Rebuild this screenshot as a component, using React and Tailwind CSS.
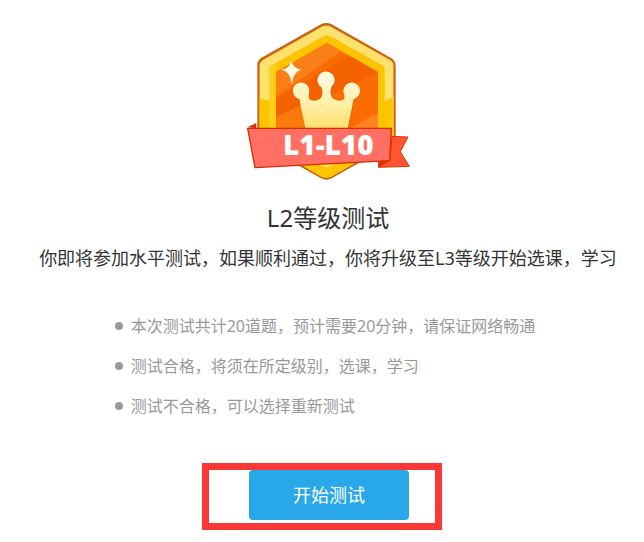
const tips = [
    "本次测试共计20道题，预计需要20分钟，请保证网络畅通",
    "测试合格，将须在所定级别，选课，学习",
    "测试不合格，可以选择重新测试",
];

// 等级徽章
function LevelBadge({ label }) {
    return (
        <svg viewBox="0 3 528 498" className="w-44" role="img" aria-label={label}>
            <defs>
                <linearGradient id="crown" x1="0" y1="0" x2="0" y2="1">
                    <stop offset="0" stopColor="#fffbe8" />
                    <stop offset="0.5" stopColor="#fff1b0" />
                    <stop offset="1" stopColor="#ffe068" />
                </linearGradient>
                <linearGradient id="rim" x1="0" y1="0" x2="1" y2="0">
                    <stop offset="0" stopColor="#ffd21f" />
                    <stop offset="0.1" stopColor="#ffc400" />
                    <stop offset="1" stopColor="#ffc400" />
                </linearGradient>
                <clipPath id="plate">
                    <path d="M70 134 L245 35 Q259 28 273 35 L449 134 Q461 141 461 154 V364 Q461 377 449 384 L273 485 Q259 491 245 485 L70 384 Q58 377 58 364 V154 Q58 141 70 134Z" />
                </clipPath>
                <clipPath id="core">
                    <path d="M261 84 L414 171 V348 L261 436 L108 348 V171Z" />
                </clipPath>
            </defs>

            {/* 外框 */}
            <path d="M67 127 L243 28 Q259 20 275 28 L453 129 Q467 137 467 153 V366 Q467 382 453 390 L275 490 Q259 498 243 490 L66 390 Q52 382 52 366 V150 Q52 135 67 127Z" fill="#cb620e" />
            <g clipPath="url(#plate)">
                <path d="M50 20 H470 V500 H50Z" fill="#ffe26c" />
                <path d="M50 246 L92 260 H428 L470 244 V500 H50Z" fill="#ffc500" />
                <path d="M458 244 H462 V400 H458Z" fill="#ffd34a" />
            </g>
            <path d="M98 150 L249 66 Q261 60 273 66 L425 151 Q434 156 434 166 V352 Q434 362 425 367 L273 453 Q261 459 249 453 L98 367 Q88 362 88 352 V166 Q88 155 98 150Z" fill="url(#rim)" />
            <path d="M89 172 V166 Q89 155 98 150 L249 66 Q261 60 273 66 L425 151 Q433 156 433 166" fill="none" stroke="#f0a800" strokeWidth="2" strokeDasharray="5 4" />
            <path d="M220 440 L257 457 Q263 458 272 452 L300 436Z" fill="#ffe26c" />
            <g clipPath="url(#core)">
                <path d="M100 80 H420 V440 H100Z" fill="#f96c00" />
                <path d="M100 80 H345 L100 250Z" fill="#fb7e18" />
                <path d="M345 115 L414 155 V172 L108 320 V252Z" fill="#f46200" />
                <path d="M100 310 L190 266 V350 H100Z" fill="#fb7a0c" />
                <path d="M414 294 V350 H310Z" fill="#fc8422" />
            </g>

            {/* 皇冠 */}
            <path d="M178 252 A25 25 0 1 1 207 236 Q203 251 214 256 Q228 260 240 251 Q252 240 245 218 A26 26 0 1 1 274 216 Q267 240 280 251 Q293 260 308 256 Q317 251 312 237 A25 25 0 1 1 341 252 L320 345 H199Z" fill="#dc5200" opacity="0.35" transform="translate(2 5)" />
            <path d="M178 252 A25 25 0 1 1 207 236 Q203 251 214 256 Q228 260 240 251 Q252 240 245 218 A26 26 0 1 1 274 216 Q267 240 280 251 Q293 260 308 256 Q317 251 312 237 A25 25 0 1 1 341 252 L322 345 H197Z" fill="url(#crown)" />
            <path d="M154 134 Q158 160 185 164 Q159 169 156 207 Q151 169 124 164 Q151 160 154 134Z" fill="#fffbe6" />

            {/* 丝带 */}
            <path d="M22 337 L49 324 V340Z" fill="#dc3200" />
            <path d="M456 364 L504 366 L481 410 L508 454 L416 457 V440 L450 436Z" fill="#ff5632" stroke="#d93409" strokeWidth="3" strokeLinejoin="round" />
            <path d="M416 439 L450 437 L416 458Z" fill="#de3404" />
            <path d="M23 340 H454 L449 437 L45 458Z" fill="#ff7062" stroke="#d92c00" strokeWidth="4" strokeLinejoin="round" />
            <text x="265" y="421" textAnchor="middle" fill="#fff" className="font-['Noto_Sans'] text-[84px] font-black">{label}</text>
        </svg>
    );
}

export default function App() {
    return (
        <main className="min-h-screen bg-white pt-4 pb-3 font-['Noto_Sans','Noto_Sans_CJK_SC',sans-serif] text-[#333]">
            <div className="flex flex-col items-center pl-3">
                <LevelBadge label="L1-L10" />
                <h1 className="mt-4 text-2xl leading-10">L2等级测试</h1>
                <p className="text-lg leading-10">你即将参加水平测试，如果顺利通过，你将升级至L3等级开始选课，学习</p>
                <ul className="mt-7 pr-1.5 text-base leading-10 text-[#999]">
                    {tips.map((tip) => (
                        <li key={tip} className="flex items-center gap-2">
                            <span className="size-2 shrink-0 rounded-full bg-[#999]" />
                            {tip}
                        </li>
                    ))}
                </ul>
            </div>
            <div className="mx-auto mt-[37px] w-60 border-7 border-[#fb3838] pb-[3px] pl-10">
                <button type="button" className="block h-[50px] w-40 rounded bg-[#28a8e8] text-lg text-white">开始测试</button>
            </div>
        </main>
    );
}
